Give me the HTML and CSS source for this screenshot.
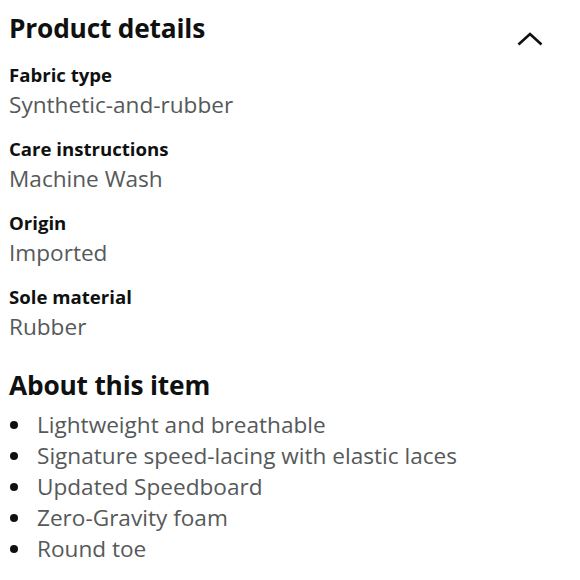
FILE: index.html
```html
<!DOCTYPE html>
<html>
<head>
<meta charset="utf-8">
<link rel="stylesheet" href="styles.css">
</head>
<body>
<div class="page">
  <div class="header">
    <h2 class="title">Product details</h2>
    <svg class="chev" width="26" height="14" viewBox="0 0 26 14"><path d="M1.5 12.5 L13 2 L24.5 12.5" fill="none" stroke="#0f1111" stroke-width="2.6"/></svg>
  </div>
  <dl class="details">
    <div class="row"><dt>Fabric type</dt><dd>Synthetic-and-rubber</dd></div>
    <div class="row"><dt>Care instructions</dt><dd>Machine Wash</dd></div>
    <div class="row"><dt>Origin</dt><dd>Imported</dd></div>
    <div class="row"><dt>Sole material</dt><dd>Rubber</dd></div>
  </dl>
  <h2 class="title about">About this item</h2>
  <ul class="bullets">
    <li>Lightweight and breathable</li>
    <li>Signature speed-lacing with elastic laces</li>
    <li>Updated Speedboard</li>
    <li>Zero-Gravity foam</li>
    <li>Round toe</li>
  </ul>
</div>
</body>
</html>
```
FILE: styles.css
```css
* { box-sizing: border-box; }
html, body { margin: 0; padding: 0; background: #fff; }
body { font-family: "Open Sans", "Noto Sans", sans-serif; color: #0f1111; }
.page { padding: 11px 9px 0 9px; }
.header { display: flex; justify-content: space-between; align-items: flex-start; }
.title { margin: 0; font-size: 26.3px; font-weight: 700; line-height: 34px; letter-spacing: -0.2px; }
.chev { margin: 21px 28px 0 0; }
.details { margin: 15px 0 0 0; }
.row { display: flex; flex-direction: column; margin-bottom: 14px; }
dt { font-size: 18.6px; font-weight: 700; line-height: 28px; }
dd { margin: 0; font-size: 22.6px; line-height: 32px; color: #565959; }
.about { margin-top: 25px; }
.bullets { list-style: none; margin: 7px 0 0 0; padding: 0; }
.bullets li { position: relative; padding-left: 28px; font-size: 22.6px; line-height: 31px; color: #565959; }
.bullets li::before { content: ""; position: absolute; left: 1px; top: 12px; width: 8px; height: 8px; border-radius: 50%; background: #0f1111; }
```
